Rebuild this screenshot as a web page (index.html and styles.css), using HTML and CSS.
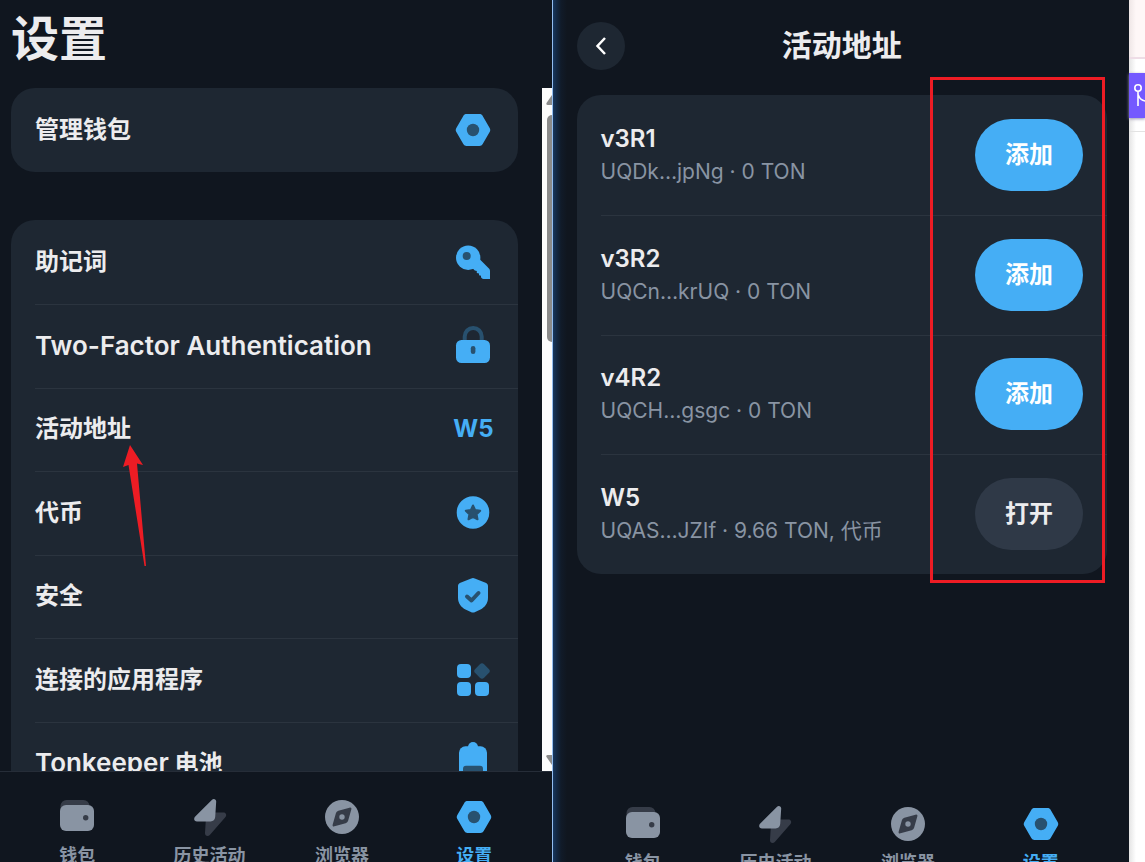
FILE: index.html
```html
<!DOCTYPE html>
<html lang="zh-CN">
<head>
<meta charset="utf-8">
<meta name="viewport" content="width=device-width, initial-scale=1">
<title>设置</title>
<link rel="stylesheet" href="styles.css">
</head>
<body>
<svg class="sprite" aria-hidden="true">
  <symbol id="nut" viewBox="0 0 36 36">
    <path fill="#45aef5" d="M11.6 2h12.8c1.5 0 2.600.6 3.300 1.900l7.100 12.300c.6 1.200.6 2.400 0 3.600l-7.100 12.300c-.7 1.300-1.800 1.900-3.300 1.900H11.600c-1.500 0-2.600-.6-3.300-1.900L1.200 19.800c-.6-1.200-.6-2.400 0-3.600L8.300 3.900C9 2.600 10.100 2 11.600 2z"/>
    <circle cx="18" cy="18" r="6.200" fill="#28516f"/>
  </symbol>
  <symbol id="wallet" viewBox="0 0 36 36">
    <rect x="1.500" y="1" width="29" height="16" rx="6" fill="#363c48"/>
    <rect x="1" y="6" width="34" height="26" rx="6" fill="#8994a3"/>
    <circle cx="26.700" cy="18.700" r="2.700" fill="#363c48"/>
  </symbol>
  <symbol id="bolt" viewBox="0 0 36 38">
    <path fill="#363c48" d="M21 13.500h10.500c2.500 0 3.500 2.500 2 4.500L17.800 36c-1.800 2-5 1-4.800-2l.8-13z"/>
    <path fill="#8994a3" d="M19.800 1C21.500-.8 24.300.2 24.200 2.600l-1 15.400c-.2 2.800-1.900 4.400-4.600 4.400H5c-2.700 0-3.700-2.500-2-4.600z"/>
  </symbol>
  <symbol id="compass" viewBox="0 0 36 36">
    <circle cx="18" cy="18" r="17" fill="#8994a3"/>
    <path fill="#363c48" d="M25.500 8.700c1.400-.5 2.300.5 1.800 1.900l-3.200 11.200c-.4 1.200-1.200 2-2.500 2.500l-11.100 3c-1.400.5-2.300-.5-1.800-1.900l3.200-11.200c.4-1.200 1.200-2 2.500-2.500z"/>
    <circle cx="18" cy="18" r="2.700" fill="#8994a3"/>
  </symbol>
</svg>

<main class="screens">
  <section class="panel panel-settings">
    <h1 class="page-title">设置</h1>
    <div class="viewport">
      <div class="content">
        <ul class="card">
          <li class="row"><a class="row-link" href="#">管理钱包<svg class="icon"><use href="#nut"/></svg></a></li>
        </ul>
        <ul class="card">
          <li class="row"><a class="row-link" href="#">助记词
            <svg class="icon" viewBox="0 0 36 36"><path fill="#45aef5" d="M25 15.500 34.200 24.800Q35 25.600 35 27v8h-6.500q-1 0-1.700-.8l-.8-.9v-1.500l-2-.6v-1.800l-2.200-.5v-1.800l-2-.6-3-3z"/><circle cx="13.200" cy="13.700" r="12.200" fill="#45aef5"/><circle cx="11.700" cy="12" r="4" fill="#28516f"/></svg></a></li>
          <li class="row"><a class="row-link" href="#"><span class="latin">Two-Factor Authentication</span>
            <svg class="icon" viewBox="0 0 36 36"><path fill="none" stroke="#28516f" stroke-width="4" d="M9.700 15V8.500a8.500 8.500 0 0 1 17 0V15"/><rect x="1" y="12" width="34" height="23" rx="5.500" fill="#45aef5"/><rect x="15.800" y="18" width="4.600" height="8" rx="2.300" fill="#28516f"/></svg></a></li>
          <li class="row row-marked"><a class="row-link" href="#">活动地址<span class="value">W5</span></a>
            <svg class="arrow" viewBox="0 0 24 121" aria-hidden="true"><path fill="#ed1c24" d="M8 0 21 20l-6-1.500L24 121h-1.500L6.500 20 1 22z"/></svg></li>
          <li class="row"><a class="row-link" href="#">代币
            <svg class="icon" viewBox="0 0 36 36"><circle cx="18" cy="17.500" r="16.300" fill="#45aef5"/><path fill="#28516f" stroke="#28516f" stroke-width="2" stroke-linejoin="round" d="m18 10.500 2.200 4.600 5 .7-3.600 3.500.9 5-4.500-2.400-4.500 2.400.9-5-3.600-3.500 5-.7z"/></svg></a></li>
          <li class="row"><a class="row-link" href="#">安全
            <svg class="icon" viewBox="0 0 36 36"><path fill="#45aef5" d="M16.200.500q1.800-.9 3.600 0l11.400 4.400Q33 5.800 33 7.800v11.900c0 6-3.500 9.500-7.500 11.800l-5.300 2.400q-2.200 1-4.400 0L10.500 31.500C6.500 29.200 3 25.700 3 19.700V7.800q0-2 1.800-2.900z"/><path fill="none" stroke="#28516f" stroke-width="4" stroke-linecap="round" stroke-linejoin="round" d="m12 18.500 4.500 4 7-7.500"/></svg></a></li>
          <li class="row"><a class="row-link" href="#">连接的应用程序
            <svg class="icon" viewBox="0 0 36 36"><g fill="#45aef5"><rect x="2" y="2" width="14" height="14" rx="4"/><rect x="2" y="20" width="14" height="14" rx="4"/><rect x="20" y="20" width="14" height="14" rx="4"/></g><rect x="20.700" y="2.700" width="12.600" height="12.600" rx="3" fill="#28516f" transform="rotate(45 27 9)"/></svg></a></li>
          <li class="row"><a class="row-link" href="#"><span><span class="latin">Tonkeeper</span> 电池</span>
            <svg class="icon" viewBox="0 0 36 36"><circle cx="18" cy="2" r="5" fill="#45aef5"/><rect x="4" y="1.300" width="28" height="36" rx="6.500" fill="#45aef5"/><rect x="8" y="20.700" width="20" height="13" rx="3" fill="#28516f"/></svg></a></li>
        </ul>
      </div>
      <div class="scrollbar" aria-hidden="true">
        <svg class="scroll-cap" viewBox="0 0 10 27"><path fill="#8b8b8b" d="M10 7v10H5.500q-2-.5-1-2z"/></svg>
        <div class="thumb"></div>
        <svg class="scroll-cap" viewBox="0 0 10 27"><path fill="#8b8b8b" d="M10 21V11H5.500q-2 .5-1 2z"/></svg>
      </div>
    </div>
    <nav class="tabs tabs-lined">
      <a class="tab" href="#"><svg class="tab-icon"><use href="#wallet"/></svg>钱包</a>
      <a class="tab" href="#"><svg class="tab-icon" viewBox="0 0 36 36"><use href="#bolt" width="36" height="38"/></svg>历史活动</a>
      <a class="tab" href="#"><svg class="tab-icon"><use href="#compass"/></svg>浏览器</a>
      <a class="tab tab-active" href="#"><svg class="tab-icon"><use href="#nut"/></svg>设置</a>
    </nav>
  </section>

  <section class="panel panel-addresses">
    <header class="bar">
      <button class="back" type="button" aria-label="返回"><svg class="chevron" viewBox="0 0 12 20"><path fill="none" stroke="#fff" stroke-width="2.500" d="M10 2 2.500 10 10 18"/></svg></button>
      <h2 class="bar-title">活动地址</h2>
    </header>
    <div class="addresses">
      <ul class="card">
        <li class="address"><div><p class="name">v3R1</p><p class="detail">UQDk…jpNg · 0 TON</p></div><button class="action" type="button">添加</button></li>
        <li class="address"><div><p class="name">v3R2</p><p class="detail">UQCn…krUQ · 0 TON</p></div><button class="action" type="button">添加</button></li>
        <li class="address"><div><p class="name">v4R2</p><p class="detail">UQCH…gsgc · 0 TON</p></div><button class="action" type="button">添加</button></li>
        <li class="address"><div><p class="name">W5</p><p class="detail">UQAS…JZIf · 9.66 TON, 代币</p></div><button class="action action-open" type="button">打开</button></li>
      </ul>
      <div class="highlight" aria-hidden="true"></div>
    </div>
    <nav class="tabs">
      <a class="tab" href="#"><svg class="tab-icon"><use href="#wallet"/></svg>钱包</a>
      <a class="tab" href="#"><svg class="tab-icon" viewBox="0 0 36 36"><use href="#bolt" width="36" height="38"/></svg>历史活动</a>
      <a class="tab" href="#"><svg class="tab-icon"><use href="#compass"/></svg>浏览器</a>
      <a class="tab tab-active" href="#"><svg class="tab-icon"><use href="#nut"/></svg>设置</a>
    </nav>
  </section>

  <aside class="behind" aria-hidden="true">
    <div class="behind-top"></div>
    <div class="behind-mid">
      <svg class="behind-badge" viewBox="0 0 16 45"><g fill="none" stroke="#fff" stroke-width="1.600"><circle cx="9" cy="15" r="3.200"/><path d="M9 18.500V33M9 21.500q2.500 6.500 8 6.500"/></g></svg>
    </div>
  </aside>
</main>
</body>
</html>
```

FILE: styles.css
```css
* {
  box-sizing: border-box;
}

body {
  margin: 0;
  background: #fff;
  color: #ececee;
  font-family: Inter, "Noto Sans CJK SC", sans-serif;
  font-size: 24px;
  font-weight: 700;
  line-height: 36px;
}

h1,
h2,
p,
ul {
  margin: 0;
  padding: 0;
}

ul {
  list-style: none;
}

a {
  color: inherit;
  text-decoration: none;
}

button {
  border: 0;
  padding: 0;
  color: inherit;
  font: inherit;
}

.sprite {
  display: none;
}

.screens {
  display: flex;
  height: 100vh;
  overflow: hidden;
}

.panel {
  display: flex;
  flex-direction: column;
  min-width: 0;
  overflow: hidden;
  background: #10161f;
}

.panel-settings {
  flex: 552;
}

.panel-addresses {
  flex: 577;
  border-left: 1px solid #93bdf0;
  background: linear-gradient(90deg, #17375f, #132741 4px, #111b29 8px, #10161f 14px);
}

.page-title {
  flex: none;
  height: 88px;
  padding: 4px 11px;
  font-size: 48px;
  line-height: 70px;
}

.viewport {
  display: flex;
  flex: 1;
  min-height: 0;
  overflow: hidden;
}

.content {
  display: flex;
  flex: 1;
  flex-direction: column;
  gap: 48px;
  padding: 0 24px 0 11px;
}

.card {
  padding-left: 24px;
  border-radius: 24px;
  background: #1e2732;
}

.row {
  height: 84px;
}

.row:nth-child(odd):not(:first-child) {
  height: 83px;
}

.row + .row,
.address + .address {
  border-top: 1px solid #2b343f;
}

.row-marked {
  position: relative;
}

.row-link {
  display: flex;
  align-items: center;
  justify-content: space-between;
  height: 100%;
  padding-right: 24px;
}

.row + .row .row-link {
  padding-bottom: 2px;
}

.latin {
  font-size: 26px;
  font-weight: 600;
}

.value {
  color: #45aef5;
  font-size: 24px;
}

.icon {
  width: 36px;
  height: 36px;
  margin-right: 3px;
  overflow: visible;
}

.arrow {
  position: absolute;
  top: 56px;
  left: 87px;
  width: 24px;
  height: 121px;
}

.scrollbar {
  display: flex;
  flex-direction: column;
  width: 10px;
  background: #fcfcfc;
}

.scroll-cap {
  width: 10px;
  height: 27px;
}

.thumb {
  width: 5px;
  height: 227px;
  margin: 0 0 auto auto;
  border-radius: 5px 0 0 5px;
  background: #8b8b8b;
}

.tabs {
  display: grid;
  flex: none;
  grid-template-columns: repeat(4, 1fr);
  height: 83px;
  margin: auto 22px 0 24px;
  overflow: hidden;
  color: #8994a3;
  font-size: 18px;
  line-height: 26px;
}

.tabs-lined {
  height: 91px;
  margin: 0;
  padding: 0 11px;
  border-top: 1px solid #262d38;
}

.tab {
  display: flex;
  flex-direction: column;
  align-items: center;
  gap: 8px;
  padding-top: 27px;
}

.tab-active {
  color: #45aef5;
}

.tab-icon {
  flex: none;
  width: 36px;
  height: 36px;
  overflow: visible;
}

.bar {
  display: grid;
  flex: none;
  grid-template-columns: 48px 1fr 48px;
  align-items: center;
  height: 95px;
  padding: 0 22px 3px 24px;
}

.back {
  display: grid;
  place-items: center;
  width: 48px;
  height: 48px;
  border-radius: 50%;
  background: #1e2732;
}

.chevron {
  width: 12px;
  height: 20px;
}

.bar-title {
  padding-bottom: 2px;
  font-size: 30px;
  line-height: 44px;
  text-align: center;
}

.addresses {
  position: relative;
  padding: 0 22px 0 24px;
}

.address {
  display: flex;
  align-items: center;
  justify-content: space-between;
  height: 120px;
  padding-right: 24px;
}

.address + .address {
  padding-bottom: 2px;
}

.address:nth-child(3) {
  height: 119px;
}

.name {
  padding-top: 2px;
  font-size: 24px;
  font-weight: 600;
  line-height: 32px;
}

.detail {
  color: #8994a3;
  font-size: 21px;
  font-weight: 400;
  line-height: 34px;
}

.action {
  width: 108px;
  height: 72px;
  border-radius: 36px;
  background: #45aef5;
  color: #fff;
}

.action-open {
  background: #2f3947;
  color: #ececee;
}

.highlight {
  position: absolute;
  top: -18px;
  right: 24px;
  bottom: -9px;
  width: 175px;
  border: 3px solid #ed1c24;
}

.behind {
  flex: none;
  width: 16px;
  background: linear-gradient(90deg, #e4e4e4, #fff 7px);
}

.behind-top {
  height: 59px;
  border-bottom: 2px solid #eedde6;
  background: linear-gradient(90deg, #eee6e6, #fef7f7 7px);
}

.behind-mid {
  height: 73px;
  padding-top: 14px;
  border-bottom: 1px solid #e3e3e3;
}

.behind-badge {
  display: block;
  width: 16px;
  height: 45px;
  background: #7459ff;
  box-shadow: 0 1px 3px #9994b0;
}
```
